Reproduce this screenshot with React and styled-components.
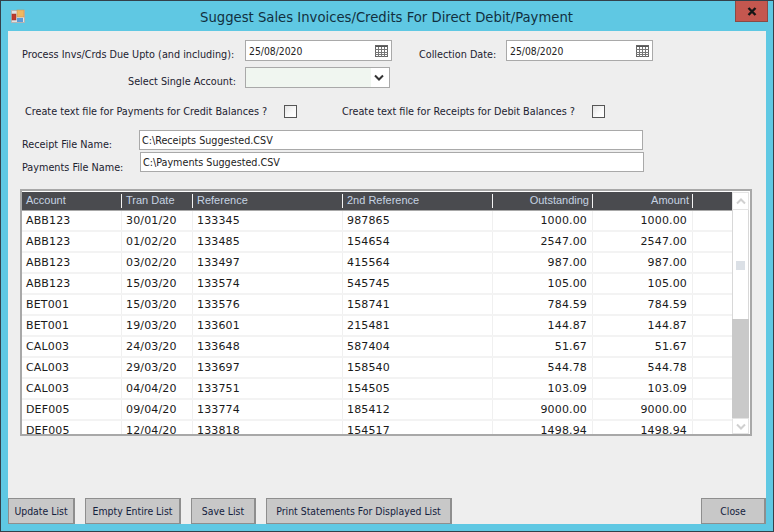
import React from "react";
import styled, { createGlobalStyle } from "styled-components";

const GlobalStyle = createGlobalStyle`
  html, body {
    margin: 0;
    padding: 0;
    background: #5fc8e3;
  }
`;

const Window = styled.div`
  box-sizing: border-box;
  width: 774px;
  height: 532px;
  border: 1px solid #33404a;
  background: #5fc8e3;
  display: flex;
  flex-direction: column;
  font-family: "DejaVu Sans Condensed", "DejaVu Sans", sans-serif;
  font-size: 10.75px;
  color: #1c2230;
  overflow: hidden;
`;

const TitleBar = styled.div`
  height: 30px;
  flex: none;
  display: flex;
  align-items: center;
  position: relative;
  padding-left: 10px;
`;

const Title = styled.div`
  position: absolute;
  left: 199px;
  top: 6px;
  font-size: 14.7px;
  line-height: 20px;
  color: #12303f;
  white-space: nowrap;
`;

const CloseX = styled.div`
  position: absolute;
  right: 5px;
  top: 0;
  width: 33px;
  height: 21px;
  box-sizing: border-box;
  background: #c4574f;
  border: 1px solid #8a4a45;
  border-top: none;
  display: flex;
  align-items: center;
  justify-content: center;
`;

const Client = styled.div`
  flex: 1;
  margin: 0 7px;
  background: #eeeeee;
  display: flex;
  flex-direction: column;
  min-height: 0;
`;

const Form = styled.div`
  padding: 9px 0 0 14px;
  display: flex;
  flex-direction: column;
`;

const Row = styled.div`
  display: flex;
  align-items: center;
  height: ${(p) => p.$h || 21}px;
  margin-top: ${(p) => p.$mt || 0}px;
`;

const Label = styled.div`
  width: ${(p) => p.$w}px;
  margin-left: ${(p) => p.$ml || 0}px;
  flex: none;
  white-space: nowrap;
  text-align: ${(p) => p.$align || "left"};
  position: relative;
  top: ${(p) => p.$nudge ?? 4}px;
`;

const Field = styled.div`
  box-sizing: border-box;
  width: ${(p) => p.$w}px;
  height: ${(p) => p.$h || 21}px;
  margin-left: ${(p) => p.$ml || 0}px;
  flex: none;
  display: flex;
  align-items: center;
  justify-content: space-between;
  background: #fff;
  border: 1px solid #a9a9a9;
  padding: 0 ${(p) => p.$pr ?? 3}px 0 ${(p) => p.$pl ?? 2}px;
  white-space: nowrap;
  color: #222;
  font-size: ${(p) => p.$fs || 10.7}px;
`;

const SelectFill = styled.div`
  align-self: stretch;
  width: 125px;
  margin-left: -2px;
  background: #f0f6f0;
`;

const Check = styled.div`
  box-sizing: border-box;
  width: 13px;
  height: 13px;
  flex: none;
  border: 1px solid #555;
  background: linear-gradient(135deg, #e4e4e4 0%, #fafafa 60%, #fff 100%);
`;

const CheckLabel = styled.div`
  width: ${(p) => p.$w}px;
  margin-left: ${(p) => p.$ml}px;
  flex: none;
  white-space: nowrap;
`;

const GridBox = styled.div`
  box-sizing: border-box;
  width: 732px;
  height: 247px;
  margin: 17px 0 0 12px;
  border: 2px solid #a8a8a8;
  padding-top: 1px;
  background: #fff;
  display: flex;
  overflow: hidden;
`;

const GridMain = styled.div`
  width: 710px;
  flex: none;
  display: flex;
  flex-direction: column;
  overflow: hidden;
`;

const HeadRow = styled.div`
  height: 18px;
  flex: none;
  display: flex;
  background: #4a4b4f;
  border-bottom: 1px solid #a8a8a8;
  color: #c6d3e2;
  font-family: "Liberation Sans", sans-serif;
  font-size: 11px;
`;

const HeadCell = styled.div`
  box-sizing: border-box;
  width: ${(p) => p.$w}px;
  flex: none;
  padding: 0 4px;
  text-align: ${(p) => (p.$right ? "right" : "left")};
  line-height: 17px;
  white-space: nowrap;
  position: relative;
  &::after {
    content: "";
    position: absolute;
    right: 0;
    top: 2px;
    bottom: 2px;
    width: 1px;
    background: #f4f4f4;
  }
`;

const HeadEnd = styled.div`
  flex: 1;
`;

const DataRow = styled.div`
  height: 19px;
  flex: none;
  display: flex;
  border-bottom: 2px solid #f3f3f3;
  font-family: "DejaVu Sans", sans-serif;
  font-size: 11px;
  letter-spacing: 0.15px;
  color: #1a1a1a;
`;

const DataCell = styled.div`
  box-sizing: border-box;
  width: ${(p) => p.$w}px;
  flex: none;
  padding: 0 5px 0 4px;
  text-align: ${(p) => (p.$right ? "right" : "left")};
  line-height: 20px;
  border-right: 1px solid #f0f0f0;
  white-space: nowrap;
`;

const ScrollBar = styled.div`
  flex: 1;
  display: flex;
  flex-direction: column;
  background: #fff;
  padding-right: 1px;
`;

const ScrollBtn = styled.div`
  box-sizing: border-box;
  height: ${(p) => p.$h}px;
  flex: none;
  display: flex;
  align-items: center;
  justify-content: center;
  border: 1px solid #e4e4e4;
  background: #fff;
`;

const ScrollTrack = styled.div`
  height: 109px;
  flex: none;
  display: flex;
  justify-content: center;
  padding-top: 51px;
  box-sizing: border-box;
  border-left: 1px solid #d8d8d8;
  border-right: 1px solid #d8d8d8;
`;

const ScrollMark = styled.div`
  width: 9px;
  height: 9px;
  background: #dbe0e6;
`;

const ScrollThumb = styled.div`
  flex: 1;
  background: #c9c9c9;
`;

const Spacer = styled.div`
  flex: 1;
`;

const ButtonBar = styled.div`
  display: flex;
  align-items: stretch;
  height: 26px;
  flex: none;
`;

const Button = styled.button`
  box-sizing: border-box;
  width: ${(p) => p.$w}px;
  margin-left: ${(p) => p.$ml || 0}px;
  padding: 0 0 1px;
  background: #c8c8c8;
  border: 1px solid #8e8e8e;
  border-width: 1px 2px 1px 1px;
  font-family: "DejaVu Sans Condensed", "DejaVu Sans", sans-serif;
  font-size: 10.4px;
  color: #14213d;
  white-space: nowrap;
`;

const BottomEdge = styled.div`
  height: 7px;
  flex: none;
`;

const Calendar = () => (
  <svg width="13" height="12" viewBox="0 0 13 12" fill="none">
    <rect width="13" height="2" fill="#555" />
    <rect x="0.5" y="0.5" width="12" height="11" stroke="#666" />
    <path d="M3.5 2v10M6.5 2v10M9.5 2v10M0 4.5h13M0 7.5h13M0 9.5h13" stroke="#777" />
  </svg>
);

const Chevron = ({ color = "#333", up }) => (
  <svg width="10" height="7" viewBox="0 0 10 7" fill="none">
    <path d={up ? "M1 5.5l4-4 4 4" : "M1 1.5l4 4 4-4"} stroke={color} strokeWidth="2" />
  </svg>
);

const AppIcon = () => (
  <svg width="15" height="15" viewBox="0 0 15 15">
    <rect x="0.5" y="1.5" width="13" height="12" fill="#e2e2e2" stroke="#b4b4b4" />
    <rect x="1" y="5" width="4" height="6" fill="#c0392b" stroke="#8f3b30" strokeWidth="0.5" />
    <rect x="6" y="1" width="7" height="7" fill="#f0b860" stroke="#c9975a" strokeWidth="0.6" />
    <rect x="6" y="9" width="6" height="4" fill="#5a9bd8" />
  </svg>
);

const XMark = () => (
  <svg width="10" height="9" viewBox="0 0 10 9">
    <path d="M1.5 1l7 7M8.5 1l-7 7" stroke="#161616" strokeWidth="2.4" />
  </svg>
);

const cols = [
  { key: "account", title: "Account", w: 100 },
  { key: "date", title: "Tran Date", w: 71 },
  { key: "ref", title: "Reference", w: 150 },
  { key: "ref2", title: "2nd Reference", w: 150 },
  { key: "out", title: "Outstanding", w: 100, right: true },
  { key: "amt", title: "Amount", w: 100, right: true },
];

const rows = [
  ["ABB123", "30/01/20", "133345", "987865", "1000.00", "1000.00"],
  ["ABB123", "01/02/20", "133485", "154654", "2547.00", "2547.00"],
  ["ABB123", "03/02/20", "133497", "415564", "987.00", "987.00"],
  ["ABB123", "15/03/20", "133574", "545745", "105.00", "105.00"],
  ["BET001", "15/03/20", "133576", "158741", "784.59", "784.59"],
  ["BET001", "19/03/20", "133601", "215481", "144.87", "144.87"],
  ["CAL003", "24/03/20", "133648", "587404", "51.67", "51.67"],
  ["CAL003", "29/03/20", "133697", "158540", "544.78", "544.78"],
  ["CAL003", "04/04/20", "133751", "154505", "103.09", "103.09"],
  ["DEF005", "09/04/20", "133774", "185412", "9000.00", "9000.00"],
  ["DEF005", "12/04/20", "133818", "154517", "1498.94", "1498.94"],
];

export default function App() {
  return (
    <>
      <GlobalStyle />
      <Window>
        <TitleBar>
          <AppIcon />
          <Title>Suggest Sales Invoices/Credits For Direct Debit/Payment</Title>
          <CloseX>
            <XMark />
          </CloseX>
        </TitleBar>
        <Client>
          <Form>
            <Row>
              <Label $w={223}>Process Invs/Crds Due Upto (and including):</Label>
              <Field $w={147} $pl={3} $fs={10.3}>
                25/08/2020
                <Calendar />
              </Field>
              <Label $w={87} $ml={27}>Collection Date:</Label>
              <Field $w={147} $pl={3} $fs={10.3}>
                25/08/2020
                <Calendar />
              </Field>
            </Row>
            <Row $mt={6}>
              <Label $w={214} $align="right">Select Single Account:</Label>
              <Field $w={145} $ml={9} $pr={5}>
                <SelectFill />
                <Chevron />
              </Field>
            </Row>
            <Row $mt={13}>
              <CheckLabel $w={259} $ml={3}>Create text file for Payments for Credit Balances ?</CheckLabel>
              <Check />
              <CheckLabel $w={250} $ml={45}>Create text file for Receipts for Debit Balances ?</CheckLabel>
              <Check />
            </Row>
            <Row $mt={8} $h={20}>
              <Label $w={117}>Receipt File Name:</Label>
              <Field $w={504} $h={20}>C:\Receipts Suggested.CSV</Field>
            </Row>
            <Row $mt={2} $h={20}>
              <Label $w={118} $nudge={5}>Payments File Name:</Label>
              <Field $w={504} $h={20}>C:\Payments Suggested.CSV</Field>
            </Row>
          </Form>
          <GridBox>
            <GridMain>
              <HeadRow>
                {cols.map((c) => (
                  <HeadCell key={c.key} $w={c.w} $right={c.right}>{c.title}</HeadCell>
                ))}
                <HeadEnd />
              </HeadRow>
              {rows.map((r, i) => (
                <DataRow key={i}>
                  {r.map((v, j) => (
                    <DataCell key={j} $w={cols[j].w} $right={cols[j].right}>{v}</DataCell>
                  ))}
                </DataRow>
              ))}
            </GridMain>
            <ScrollBar>
              <ScrollBtn $h={18}><Chevron color="#d0d0d0" up /></ScrollBtn>
              <ScrollTrack><ScrollMark /></ScrollTrack>
              <ScrollThumb />
              <ScrollBtn $h={16}><Chevron color="#d0d0d0" /></ScrollBtn>
            </ScrollBar>
          </GridBox>
          <Spacer />
          <ButtonBar>
            <Button $w={67}>Update List</Button>
            <Button $w={96} $ml={10}>Empty Entire List</Button>
            <Button $w={65} $ml={10}>Save List</Button>
            <Button $w={186} $ml={10}>Print Statements For Displayed List</Button>
            <Spacer />
            <Button $w={65}>Close</Button>
          </ButtonBar>
        </Client>
        <BottomEdge />
      </Window>
    </>
  );
}
